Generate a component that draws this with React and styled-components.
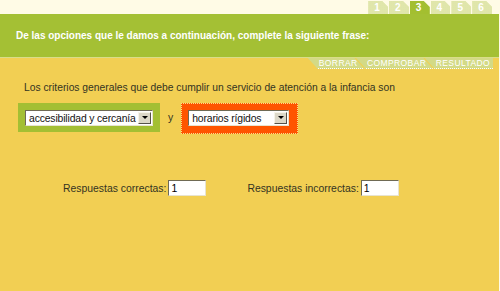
import React from "react";
import styled, { createGlobalStyle } from "styled-components";

const GlobalStyle = createGlobalStyle`
  html, body {
    margin: 0;
    padding: 0;
    background: #fffbe6;
  }
  body {
    font-family: "Liberation Sans", Arial, sans-serif;
  }
`;

const TABS = ["1", "2", "3", "4", "5", "6"];
const TOOLS = ["BORRAR", "COMPROBAR", "RESULTADO"];

function App() {
  return (
    <Page>
      <GlobalStyle />
      <TopStrip>
        <TabRow>
          {TABS.map((t) => (
            <Tab key={t} $active={t === "3"}>
              {t}
            </Tab>
          ))}
        </TabRow>
      </TopStrip>
      <Header>De las opciones que le damos a continuación, complete la siguiente frase:</Header>
      <Body>
        <ToolBar>
          {TOOLS.map((t, i) => (
            <ToolButton key={t} $last={i === TOOLS.length - 1}>
              {t}
            </ToolButton>
          ))}
        </ToolBar>
        <Question>
          Los criterios generales que debe cumplir un servicio de atención a la infancia son
        </Question>
        <AnswerRow>
          <Frame $color="#a3bf33" $padRight={7}>
            <FakeSelect $width={128}>
              <SelectText>accesibilidad y cercanía</SelectText>
              <Arrow />
            </FakeSelect>
          </Frame>
          <Joiner>y</Joiner>
          <Frame $color="#ff5500" $padRight={9} $dotted>
            <FakeSelect $width={101}>
              <SelectText>horarios rígidos</SelectText>
              <Arrow />
            </FakeSelect>
          </Frame>
        </AnswerRow>
        <ScoreRow>
          <ScoreLabel>
            Respuestas correctas:
            <ScoreBox defaultValue="1" />
          </ScoreLabel>
          <ScoreLabel>
            Respuestas incorrectas:
            <ScoreBox defaultValue="1" />
          </ScoreLabel>
        </ScoreRow>
      </Body>
    </Page>
  );
}

const Page = styled.div`
  width: 499px;
  height: 291px;
  display: flex;
  flex-direction: column;
  background: #f2cf53;
`;

const TopStrip = styled.div`
  height: 14px;
  background: #fffbe6;
  display: flex;
  justify-content: flex-end;
  align-items: flex-end;
  padding-right: 7px;
`;

const TabRow = styled.div`
  display: flex;
  height: 13px;
  gap: 1px;
`;

const Tab = styled.div`
  width: 19.8px;
  height: 13px;
  box-sizing: border-box;
  padding-left: 6px;
  color: #ffffff;
  font-size: 10px;
  font-weight: bold;
  line-height: 14px;
  clip-path: polygon(0 0, 14px 0, 20px 6px, 20px 100%, 0 100%);
  background-color: ${(p) => (p.$active ? "#a3bf30" : "#d4dc88")};
  background-image: ${(p) =>
    p.$active
      ? "none"
      : "radial-gradient(rgba(255,255,255,0.45) 0.6px, transparent 0.9px)"};
  background-size: 2px 2px;
`;

const Header = styled.div`
  height: 43px;
  background: #a4c034;
  border-bottom: 1px solid #d9dd8a;
  display: flex;
  align-items: center;
  padding-left: 16px;
  color: #ffffff;
  font-size: 10px;
  font-weight: bold;
`;

const Body = styled.div`
  flex: 1;
  display: flex;
  flex-direction: column;
`;

const ToolBar = styled.div`
  display: flex;
  justify-content: flex-end;
  padding-right: 6px;
  height: 11px;
`;

const ToolButton = styled.div`
  height: 11px;
  padding: 0 ${(p) => (p.$last ? 3 : 7)}px 0 11px;
  box-sizing: border-box;
  background: #d3da86;
  border-bottom: 1px dotted #ffffff;
  clip-path: ${(p) =>
    p.$last
      ? "polygon(0 0, 100% 0, 100% 100%, 10px 100%)"
      : "polygon(0 0, calc(100% - 10px) 0, 100% 100%, 10px 100%)"};
  color: #ffffff;
  font-size: 8.5px;
  letter-spacing: 0.4px;
  line-height: 11px;
  & + & {
    margin-left: -8.6px;
  }
`;

const Question = styled.div`
  margin: 12px 0 0 24px;
  color: #333322;
  font-size: 10.3px;
  line-height: 13px;
`;

const AnswerRow = styled.div`
  display: flex;
  align-items: flex-start;
  margin: 9px 0 0 18px;
`;

const Frame = styled.div`
  background: ${(p) => p.$color};
  padding: 7px ${(p) => p.$padRight}px 6px 7px;
  outline: ${(p) => (p.$dotted ? "1px dotted #f7e08a" : "none")};
  outline-offset: -1px;
  ${(p) => (p.$dotted ? "padding-bottom: 8px;" : "")}
`;

const FakeSelect = styled.div`
  width: ${(p) => p.$width}px;
  height: 16px;
  box-sizing: border-box;
  display: flex;
  align-items: center;
  background: #ffffff;
  border: 1px solid;
  border-color: #6f6a55 #e8e4d0 #e8e4d0 #6f6a55;
  padding: 1px;
`;

const SelectText = styled.span`
  flex: 1;
  padding-left: 2px;
  color: #111111;
  font-size: 10.4px;
  letter-spacing: -0.15px;
  white-space: nowrap;
  overflow: hidden;
`;

const Arrow = styled.span`
  width: 13px;
  height: 12px;
  box-sizing: border-box;
  background: #dcd8c8;
  border: 1px solid;
  border-color: #f6f4ea #55524a #55524a #f6f4ea;
  position: relative;
  &::after {
    content: "";
    position: absolute;
    left: 3px;
    top: 3px;
    border-left: 3px solid transparent;
    border-right: 3px solid transparent;
    border-top: 3px solid #000000;
  }
`;

const Joiner = styled.span`
  margin: 8px 8px 0 8px;
  color: #333322;
  font-size: 10.4px;
  line-height: 13px;
`;

const ScoreRow = styled.div`
  display: flex;
  gap: 41px;
  margin: 46px 0 0 63px;
`;

const ScoreLabel = styled.label`
  display: flex;
  align-items: center;
  gap: 2px;
  color: #333322;
  font-size: 10.4px;
`;

const ScoreBox = styled.input`
  width: 38px;
  height: 16px;
  box-sizing: border-box;
  margin: 0;
  padding: 0 2px;
  border: 1px solid;
  border-color: #6f6a55 #e8e4d0 #e8e4d0 #6f6a55;
  background: #ffffff;
  font-family: "Liberation Sans", Arial, sans-serif;
  font-size: 10.4px;
  color: #000000;
  outline: none;
`;

export default App;
